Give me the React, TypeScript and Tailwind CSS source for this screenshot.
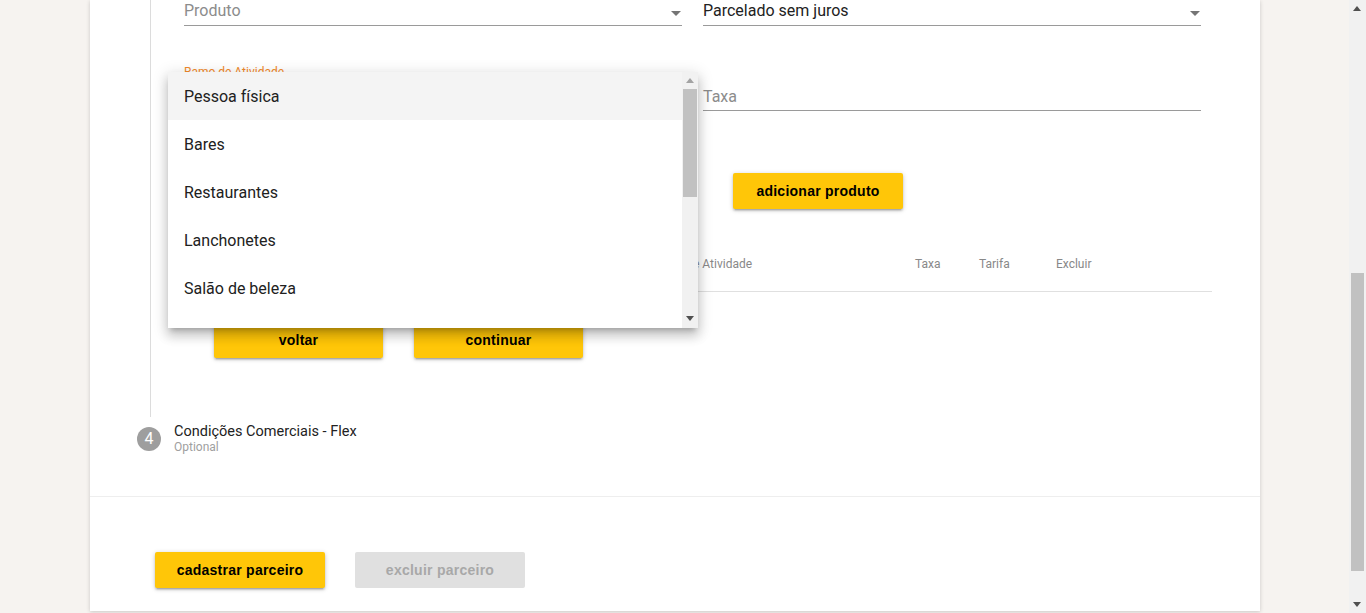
import React from "react";

// itens do menu de ramo de atividade
const ramos = ["Pessoa física", "Bares", "Restaurantes", "Lanchonetes", "Salão de beleza"];

const raised =
  "shadow-[0_1px_5px_0_rgba(0,0,0,0.2),0_2px_2px_0_rgba(0,0,0,0.14),0_3px_1px_-2px_rgba(0,0,0,0.12)]";

function ArrowDrop() {
  return (
    <svg width="24" height="24" viewBox="0 0 24 24" className="fill-[#757575] -mr-[6px]">
      <path d="M7 10l5 5 5-5z" />
    </svg>
  );
}

function YellowButton({ label, className = "" }: { label: string; className?: string }) {
  return (
    <button
      className={`h-9 rounded-[2px] bg-[#ffc608] font-['Liberation_Sans',Arial,sans-serif] text-[14px] font-bold tracking-[0.25px] text-black ${raised} ${className}`}
    >
      {label}
    </button>
  );
}

function Tri({ up, color }: { up?: boolean; color: string }) {
  return (
    <svg width="8" height="5" viewBox="0 0 8 5" style={{ fill: color }}>
      <path d={up ? "M0 5L4 0 8 5z" : "M0 0L8 0 4 5z"} />
    </svg>
  );
}

export default function App() {
  return (
    <div className="flex h-[613px] overflow-hidden bg-[#f6f3f0] font-['Roboto',sans-serif]">
      <div className="flex-1">
        <div className="relative ml-[90px] w-[1170px] bg-white shadow-[0_1px_4px_rgba(0,0,0,0.18)]">
          {/* etapa 3 + etapa 4 */}
          <div className="h-[497px] border-b border-[#eeeeee]">
            <div className="ml-[60px] w-[1110px] border-l border-[#dcdcdc] pl-[33px] pb-[59px]">
              <div className="flex w-[1028px] gap-[21px]">
                <div className="flex h-[26px] w-[498px] items-start justify-between border-b border-[#9a9a9a] pt-[1px]">
                  <span className="text-[16px] leading-5 text-[#8c8c8c]">Produto</span>
                  <ArrowDrop />
                </div>
                <div className="flex h-[26px] w-[498px] items-start justify-between border-b border-[#9a9a9a] pt-[1px]">
                  <span className="text-[16px] leading-5 text-[#222]">Parcelado sem juros</span>
                  <ArrowDrop />
                </div>
              </div>

              <div className="mt-[39px] flex w-[1028px] gap-[21px]">
                <div className="w-[498px]">
                  <div className="text-[12px] leading-[14px] text-[#f0892b]">Ramo de Atividade</div>
                  <div className="h-[32px] border-b border-[#9a9a9a]" />
                </div>
                <div className="w-[498px] pt-[14px]">
                  <div className="h-[32px] border-b border-[#9a9a9a] pt-[6px]">
                    <span className="text-[16px] leading-5 text-[#8c8c8c]">Taxa</span>
                  </div>
                </div>
              </div>

              <div className="mt-[62px] flex">
                <div className="w-[519px]" />
                <YellowButton label="adicionar produto" className="ml-[30px] w-[170px]" />
              </div>

              <div className="mt-[28px] flex h-[55px] w-[1028px] items-center border-b border-[#e0e0e0] text-[12px] text-[#888]">
                <span className="w-[240px]">Produto</span>
                <span className="w-[228px]">Parcelamento</span>
                <span className="w-[263px]">Ramo de Atividade</span>
                <span className="w-[64px]">Taxa</span>
                <span className="w-[77px]">Tarifa</span>
                <span>Excluir</span>
              </div>

              <div className="mt-[30px] flex gap-[31px] pl-[30px]">
                <YellowButton label="voltar" className="w-[169px]" />
                <YellowButton label="continuar" className="w-[169px]" />
              </div>
            </div>

            <div className="mt-[7px] flex items-center pl-[47px]">
              <div className="flex h-6 w-6 items-center justify-center rounded-full bg-[#9e9e9e] text-[16px] text-white">
                4
              </div>
              <div className="ml-[13px]">
                <div className="text-[14.5px] leading-4 text-[#222]">Condições Comerciais - Flex</div>
                <div className="text-[12px] leading-[14px] text-[#a0a0a0]">Optional</div>
              </div>
            </div>
          </div>

          {/* ações do parceiro */}
          <div className="flex h-[114px] gap-[30px] pl-[65px] pt-[55px]">
            <YellowButton label="cadastrar parceiro" className="w-[170px]" />
            <button className="h-9 w-[170px] rounded-[2px] bg-[#e0e0e0] font-['Liberation_Sans',Arial,sans-serif] text-[14px] font-bold tracking-[0.25px] text-[#a8a8a8]">
              excluir parceiro
            </button>
          </div>

          {/* menu aberto do ramo de atividade */}
          <div className="absolute left-[78px] top-[72px] flex h-[256px] w-[530px] overflow-hidden bg-white shadow-[0_5px_5px_-3px_rgba(0,0,0,0.2),0_8px_10px_1px_rgba(0,0,0,0.14),0_3px_14px_2px_rgba(0,0,0,0.12)]">
            <ul className="flex-1">
              {ramos.map((r, i) => (
                <li
                  key={r}
                  className={`flex h-12 items-center px-4 pt-[1px] text-[16px] text-[#212121] ${i === 0 ? "bg-[#f4f4f4]" : ""}`}
                >
                  {r}
                </li>
              ))}
            </ul>
            <div className="relative w-4 bg-[#f1f1f1]">
              <div className="absolute left-[4px] top-[6px]">
                <Tri up color="#a3a3a3" />
              </div>
              <div className="absolute left-[1px] top-[17px] h-[108px] w-[14px] bg-[#c1c1c1]" />
              <div className="absolute left-[4px] top-[244px]">
                <Tri color="#505050" />
              </div>
            </div>
          </div>
        </div>
      </div>

      {/* barra de rolagem da página */}
      <div className="relative w-[17px] bg-[#f1f1f1]">
        <div className="absolute left-[4px] top-[6px]">
          <Tri up color="#505050" />
        </div>
        <div className="absolute left-[2px] top-[273px] h-[298px] w-[13px] bg-[#c1c1c1]" />
        <div className="absolute left-[4px] top-[602px]">
          <Tri color="#505050" />
        </div>
      </div>
    </div>
  );
}
